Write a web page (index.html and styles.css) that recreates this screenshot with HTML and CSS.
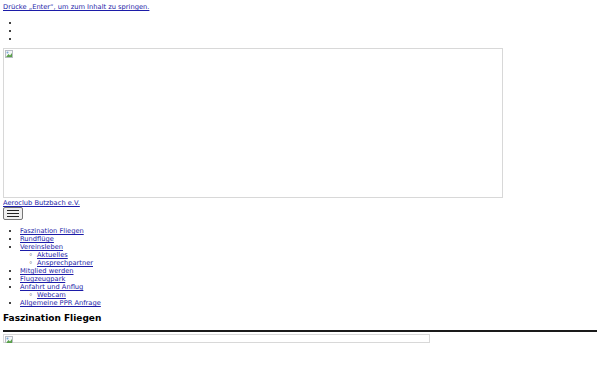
FILE: index.html
```html
<!DOCTYPE html>
<html lang="de">
<head>
<meta charset="utf-8">
<title>Aeroclub Butzbach e.V.</title>
<link rel="stylesheet" href="styles.css">
</head>
<body>
<a class="skip" href="#content">Drücke „Enter“, um zum Inhalt zu springen.</a>
<ul class="top-list">
  <li></li>
  <li></li>
  <li></li>
</ul>
<div class="broken header-img">
  <svg class="broken-icon" viewBox="0 0 8 8" width="8" height="8"><rect x="0.5" y="0.5" width="7" height="7" fill="#f4f6f8" stroke="#b8bcc4"/><path d="M1 7 L3.5 4 L5 5.5 L7 3 L7 7 Z" fill="#5aa04a"/><circle cx="2.5" cy="2.5" r="1" fill="#7aa8d8"/></svg>
</div>
<div class="site-title"><a href="#">Aeroclub Butzbach e.V.</a></div>
<button class="menu-btn" aria-label="Menü"><span></span><span></span><span></span></button>
<ul class="nav">
  <li><a href="#">Faszination Fliegen</a></li>
  <li><a href="#">Rundflüge</a></li>
  <li><a href="#">Vereinsleben</a>
    <ul class="sub">
      <li><a href="#">Aktuelles</a></li>
      <li><a href="#">Ansprechpartner</a></li>
    </ul>
  </li>
  <li><a href="#">Mitglied werden</a></li>
  <li><a href="#">Flugzeugpark</a></li>
  <li><a href="#">Anfahrt und Anflug</a>
    <ul class="sub">
      <li><a href="#">Webcam</a></li>
    </ul>
  </li>
  <li><a href="#">Allgemeine PPR Anfrage</a></li>
</ul>
<h2 id="content" class="page-title">Faszination Fliegen</h2>
<hr class="rule">
<div class="broken content-img">
  <svg class="broken-icon" viewBox="0 0 8 8" width="8" height="8"><rect x="0.5" y="0.5" width="7" height="7" fill="#f4f6f8" stroke="#b8bcc4"/><path d="M1 7 L3.5 4 L5 5.5 L7 3 L7 7 Z" fill="#5aa04a"/><circle cx="2.5" cy="2.5" r="1" fill="#7aa8d8"/></svg>
</div>
</body>
</html>
```
FILE: styles.css
```css
html, body {
  background: #fff;
}
body {
  margin: 3px;
  font-family: "DejaVu Sans", sans-serif;
  font-size: 6.7px;
  line-height: 8px;
  color: #000;
}
a {
  color: #1c1ca8;
  text-decoration: underline;
}
.skip {
  display: inline-block;
}
.top-list {
  margin: 8px 0 0 0;
  padding-left: 17px;
}
.top-list li {
  height: 8px;
}
.broken {
  box-sizing: border-box;
  border: 1px solid #d8d8d8;
  position: relative;
}
.header-img {
  width: 500px;
  height: 150px;
  margin-top: 5px;
}
.broken-icon {
  position: absolute;
  left: 1px;
  top: 1px;
}
.site-title {
  margin-top: 1px;
}
.menu-btn {
  display: flex;
  flex-direction: column;
  justify-content: center;
  gap: 2px;
  width: 20px;
  height: 13px;
  padding: 0 3px;
  margin: 0;
  background: #efefef;
  border: 1px solid #767676;
  border-radius: 2px;
}
.menu-btn span {
  display: block;
  height: 1px;
  background: #222;
  width: 100%;
}
.nav {
  margin: 7px 0 0 0;
  padding-left: 17px;
}
.nav .sub {
  margin: 0;
  padding-left: 17px;
  list-style-type: "◦  ";
}
.page-title {
  font-size: 9px;
  font-weight: bold;
  line-height: 11px;
  margin: 6px 0 0 0;
}
.rule {
  margin: 6px 0 0 0;
  border: 0;
  border-top: 2px solid #1a1a1a;
  height: 0;
}
.content-img {
  width: 427px;
  height: 9px;
  margin-top: 2px;
}
```
